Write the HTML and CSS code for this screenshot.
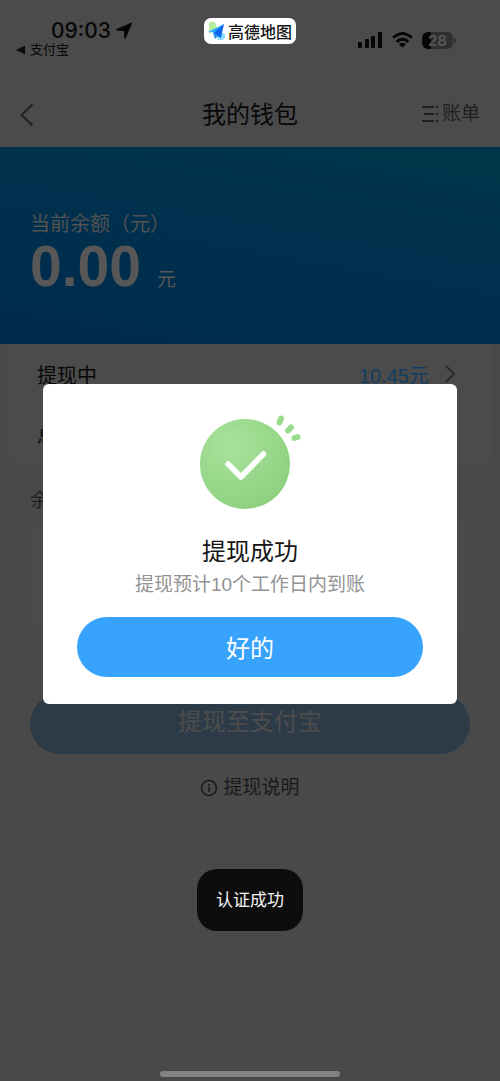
FILE: index.html
```html
<!DOCTYPE html>
<html lang="zh-CN">
<head>
<meta charset="utf-8">
<meta name="viewport" content="width=device-width, initial-scale=1">
<title>我的钱包</title>
<link rel="stylesheet" href="styles.css">
</head>
<body>
<div class="page">
  <header class="status">
    <div class="status-left">
      <div class="clock"><span>09:03</span>
        <svg width="18" height="18" viewBox="0 0 18 18" aria-hidden="true"><path d="M16.2.8Q17.2.5 17 1.6L10.6 16.4Q9.8 17.6 9.3 16.2L9 9 1.7 8.6Q0 8 1.6 7.1Z" fill="#050505"/></svg>
      </div>
      <a class="return" href="#"><svg width="9" height="10" viewBox="0 0 9 10" aria-hidden="true"><path d="M0 5 9 .5v9z" fill="#0c0c0c"/></svg>支付宝</a>
    </div>
    <div class="brand">
      <svg width="18" height="20" viewBox="0 0 18 20" aria-hidden="true"><path d="M1 3Q1 1 3 1h4l2 5-8 7z" fill="#b6eca0"/><path d="M9 15 15 12l2 1q1 5-3 6h-4z" fill="#8edcff"/><path d="M0 11 16 3 10 12z" fill="#27a8fb"/><path d="M16 3 13 17 5 12.600z" fill="#0867ec"/><path d="m5 12.600 5 2.700-3 2.600z" fill="#2994ef"/></svg>
      <span>高德地图</span>
    </div>
    <div class="status-right">
      <svg width="25" height="16" viewBox="0 0 25 16" fill="#060606" aria-hidden="true"><rect y="10" width="4" height="6" rx="1"/><rect x="7" y="7" width="4" height="9" rx="1"/><rect x="13" y="4" width="4" height="12" rx="1"/><rect x="20" width="4" height="16" rx="1"/></svg>
      <svg width="21" height="16" viewBox="0 0 21 16" fill="none" stroke="#060606" stroke-width="3" aria-hidden="true"><path d="M1.2 5.700Q10.500-2.700 19.800 5.700M4.700 9.800Q10.500 4.500 16.300 9.800"/><path d="M7 12.200Q10.500 9.500 14 12.200L10.500 15.800Z" fill="#060606" stroke="none"/></svg>
      <div class="battery"><span>28</span></div><i class="battery-cap"></i>
    </div>
  </header>
  <nav class="nav">
    <button class="back" aria-label="返回"><svg width="14" height="24" viewBox="0 0 14 24" fill="none" stroke="#202020" stroke-width="2"><path d="M12.500 1.500 1.500 12 12.500 22.500"/></svg></button>
    <h1>我的钱包</h1>
    <a class="bill" href="#"><svg width="17" height="18" viewBox="0 0 17 18" stroke="#202020" stroke-width="2" aria-hidden="true"><path d="M0 2h12M2 9h10M0 16h12M14 2h2M14 9h2M14 16h2"/></svg>账单</a>
  </nav>
  <section class="hero">
    <p>当前余额（元）</p>
    <div class="amount"><strong>0.00</strong><span>元</span></div>
  </section>
  <main>
    <section class="rows">
      <a class="row" href="#"><span>提现中</span><span class="value">10.45元<svg width="10" height="18" viewBox="0 0 10 18" fill="none" stroke="#2c2c2c" stroke-width="2" aria-hidden="true"><path d="m1 1 8 8-8 8"/></svg></span></a>
      <div class="row"><span>总</span></div>
    </section>
    <h2 class="group">余</h2>
    <section class="account"></section>
    <button class="withdraw" disabled>提现至支付宝</button>
    <a class="info" href="#"><svg width="18" height="18" viewBox="0 0 18 18" fill="none" stroke="#191919" stroke-width="1.500" aria-hidden="true"><circle cx="9" cy="9" r="7.500"/><path d="M9 8v5M9 5v2"/></svg>提现说明</a>
  </main>
  <div class="home"></div>
</div>
<div class="layer">
  <section class="dialog" role="dialog" aria-labelledby="dialog-title">
    <svg class="success" width="104" height="96" viewBox="0 0 104 96" aria-hidden="true">
      <defs><radialGradient id="green" cx=".35" cy=".3" r=".8"><stop offset="0" stop-color="#a9e39a"/><stop offset="1" stop-color="#8bcf7e"/></radialGradient></defs>
      <circle cx="47" cy="50" r="45" fill="url(#green)"/>
      <path d="m30 50 13 13 22.500-23" fill="none" stroke="#fff" stroke-width="5.500" stroke-linecap="round" stroke-linejoin="round"/>
      <path d="m81.500 8.500 1.500-4M90 16.500l3-3M96.500 24l3-1" fill="none" stroke="#99dd8c" stroke-width="6" stroke-linecap="round"/>
    </svg>
    <h2 id="dialog-title">提现成功</h2>
    <p>提现预计10个工作日内到账</p>
    <button class="confirm">好的</button>
  </section>
</div>
<div class="toast" role="status">认证成功</div>
</body>
</html>
```
FILE: styles.css
```css
* { box-sizing: border-box; }
body, h1, h2, p { margin: 0; font-weight: 400; }
body { font-family: "Liberation Sans", "Noto Sans CJK SC", sans-serif; background: #494949; color: #080808; }
button { font: inherit; border: 0; padding: 0; }
a { color: inherit; text-decoration: none; }
svg { display: block; flex: none; }
.page { min-height: 100vh; display: flex; flex-direction: column; }
.status { height: 80px; padding: 18px 16px 0; display: grid; grid-template-columns: 1fr auto 1fr; align-items: start; background: #4b4b4b; }
.status-left { display: flex; flex-direction: column; }
.clock { display: flex; align-items: center; gap: 4px; padding-left: 35px; height: 25px; font: 500 21px/25px Inter, sans-serif; }
.return { display: flex; align-items: center; gap: 5px; font-size: 13px; line-height: 14px; }
.brand { display: flex; align-items: center; gap: 2px; height: 26px; padding: 0 4px; background: #fff; border-radius: 7px; font: 500 16px/24px "Noto Sans CJK SC", sans-serif; color: #151515; }
.status-right { display: flex; align-items: center; justify-content: flex-end; height: 44px; gap: 9px; padding-right: 28px; }
.battery { width: 31px; height: 17px; border-radius: 6px; background: linear-gradient(90deg, #060606 28%, #303030 28%); color: #555; font: 700 15px/17px Inter, sans-serif; text-align: center; }
.battery-cap { width: 2px; height: 5px; margin-left: -8px; background: #303030; border-radius: 0 2px 2px 0; }
.nav { height: 67px; padding: 2px 20px 0; display: grid; grid-template-columns: 1fr auto 1fr; align-items: center; background: #4b4b4b; }
.back { justify-self: start; background: none; }
.nav h1 { font-size: 24px; line-height: 36px; }
.bill { justify-self: end; display: flex; align-items: center; gap: 3px; padding-bottom: 2px; font-size: 19px; line-height: 28px; color: #202020; }
.hero { height: 197px; padding: 63px 30px 0; background: linear-gradient(190deg, #003649 0%, #00304e 50%, #002a4c 100%); color: #575757; }
.hero p { font-size: 20px; line-height: 28px; color: #525252; }
.amount { display: flex; align-items: baseline; gap: 16px; line-height: 56px; font-size: 19px; }
.amount strong { font-size: 57px; line-height: 56px; font-weight: 700; }
main { flex: 1; display: flex; flex-direction: column; }
.rows { margin: 0 8px; background: #4b4b4b; border-radius: 0 0 6px 6px; }
.row { height: 60px; padding: 0 37px 0 29px; display: flex; align-items: center; justify-content: space-between; font-size: 20px; }
.value { display: flex; align-items: center; gap: 16px; color: #133d62; }
.group { margin: 22px 30px 0; font-size: 19px; line-height: 30px; color: #1f1f1f; }
.account { height: 104px; margin: 8px 30px 0; background: #4b4b4b; border-radius: 6px; }
.withdraw { height: 60px; margin: 66px 30px 0; border-radius: 30px; background: #2d3b48; color: #4d4d4d; font-size: 24px; line-height: 36px; padding-bottom: 4px; }
.info { align-self: center; display: flex; align-items: center; gap: 5px; margin-top: 20px; font-size: 19px; line-height: 28px; color: #191919; }
.home { align-self: center; width: 36%; height: 6px; margin-bottom: 4px; border-radius: 3px; background: #828282; }
.layer { position: fixed; inset: 0; display: flex; align-items: center; justify-content: center; padding: 6px 43px 0; }
.dialog { width: 100%; padding: 30px 34px 27px; display: flex; flex-direction: column; align-items: center; background: #fff; border-radius: 6px; }
.dialog h2 { margin-top: 24px; font-size: 24px; line-height: 36px; color: #151515; }
.dialog p { font-size: 19px; line-height: 30px; color: #929292; }
.confirm { width: 100%; height: 60px; margin-top: 17px; border-radius: 30px; background: #37a3fd; color: #fff; font-size: 24px; }
.toast { position: fixed; bottom: 150px; left: 50%; transform: translateX(-50%); padding: 20px 19px 18px; border-radius: 20px; background: #0d0d0d; color: #f5f5f5; font-size: 17px; line-height: 24px; white-space: nowrap; }
```
